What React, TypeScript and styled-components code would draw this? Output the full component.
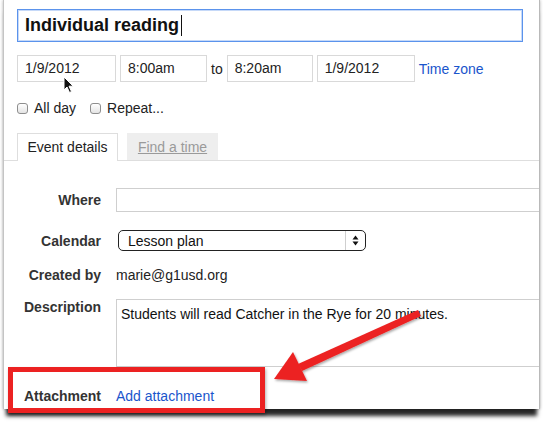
import styled, { createGlobalStyle } from 'styled-components';

const GlobalStyle = createGlobalStyle`
  html, body {
    margin: 0;
    padding: 0;
    background: #fff;
  }
  body {
    font-family: "Liberation Sans", Arial, sans-serif;
    color: #222;
  }
`;

const App = () => {
  return (
    <Frame>
      <GlobalStyle />
      <Panel>
        {/* title + time */}
        <TopSection>
          <TitleBox>
            Individual reading
            <Caret />
          </TitleBox>
          <DateRow>
            <DateInput $width={99}>1/9/2012</DateInput>
            <DateInput $width={87}>8:00am</DateInput>
            <Plain>to</Plain>
            <DateInput $width={86}>8:20am</DateInput>
            <DateInput $width={98}>1/9/2012</DateInput>
            <Link>Time zone</Link>
          </DateRow>
          <CheckRow>
            <CheckItem>
              <CheckBox />
              All day
            </CheckItem>
            <CheckItem>
              <CheckBox />
              Repeat...
            </CheckItem>
          </CheckRow>
        </TopSection>

        {/* tabs */}
        <TabBar>
          <Tab $active>Event details</Tab>
          <Tab>Find a time</Tab>
        </TabBar>

        {/* details */}
        <Form>
          <FormRow $top={27}>
            <Label>Where</Label>
            <TextBox />
          </FormRow>
          <FormRow $top={18}>
            <Label>Calendar</Label>
            <Select>
              <SelectText>Lesson plan</SelectText>
              <SelectArrows>
                <svg width="7" height="11" viewBox="0 0 7 11">
                  <path d="M3.5 0.5 L6.5 4.5 L0.5 4.5 Z" fill="#111" />
                  <path d="M3.5 10.5 L6.5 6.5 L0.5 6.5 Z" fill="#111" />
                </svg>
              </SelectArrows>
            </Select>
          </FormRow>
          <FormRow $top={16}>
            <Label>Created by</Label>
            <Value>marie@g1usd.org</Value>
          </FormRow>
          <FormRow $top={16} $start>
            <Label>Description</Label>
            <TextArea>Students will read Catcher in the Rye for 20 minutes.</TextArea>
          </FormRow>
          <FormRow $top={21}>
            <Label>Attachment</Label>
            <Link>Add attachment</Link>
          </FormRow>
        </Form>
      </Panel>

      {/* annotations */}
      <Pointer>
        <svg width="12" height="18" viewBox="0 0 12 18">
          <path
            d="M1 1 L1 14 L4 11 L6.5 16.5 L8.5 15.5 L6 10.2 L10.2 10.2 Z"
            fill="#111"
            stroke="#fff"
            strokeWidth="1"
            strokeLinejoin="round"
          />
        </svg>
      </Pointer>
      <Highlight />
      <ArrowLayer>
        <svg width="543" height="426" viewBox="0 0 543 426">
          <defs>
            <filter id="sh" x="-10%" y="-10%" width="120%" height="120%">
              <feDropShadow dx="1" dy="1.5" stdDeviation="1.2" floodColor="#000" floodOpacity="0.35" />
            </filter>
          </defs>
          <g filter="url(#sh)" fill="#ec2222">
            <path d="M418 310 L421 316 L302 371 L298 364 Z" />
            <path d="M274 379 L293 352 L307 381 Z" />
          </g>
        </svg>
      </ArrowLayer>
    </Frame>
  );
};

export default App;

const Frame = styled.div`
  position: relative;
  width: 543px;
  height: 426px;
  overflow: hidden;
`;

const Panel = styled.div`
  box-sizing: border-box;
  margin-left: 3px;
  width: 537px;
  height: 409px;
  background: #fff;
  border-left: 1px solid #c4c4c4;
  border-right: 1px solid #b9b9b9;
  box-shadow: 0 10px 4px -3px rgba(0, 0, 0, 0.85), 0 0 3px rgba(0, 0, 0, 0.3);
  overflow: hidden;
`;

const TopSection = styled.section`
  padding: 9px 0 0 13px;
`;

const TitleBox = styled.div`
  box-sizing: border-box;
  display: flex;
  align-items: center;
  width: 506px;
  height: 33px;
  padding-left: 7px;
  border: 1px solid #5b93ec;
  box-shadow: inset 0 0 0 1px rgba(91, 147, 236, 0.35);
  font-size: 18px;
  font-weight: bold;
  color: #111;
`;

const Caret = styled.span`
  display: inline-block;
  width: 1px;
  height: 21px;
  margin-left: 2px;
  background: #111;
`;

const DateRow = styled.div`
  display: flex;
  align-items: center;
  gap: 4px;
  margin-top: 13px;
  font-size: 14px;
`;

const DateInput = styled.div<{ $width: number }>`
  box-sizing: border-box;
  width: ${(props) => props.$width}px;
  height: 27px;
  padding-left: 7px;
  line-height: 25px;
  border: 1px solid #d9d9d9;
  color: #222;
`;

const Plain = styled.span`
  color: #222;
`;

const Link = styled.span`
  font-size: 14px;
  line-height: 16px;
  color: #1a55cc;
`;

const CheckRow = styled.div`
  display: flex;
  align-items: center;
  gap: 14px;
  margin-top: 18px;
  font-size: 14px;
  line-height: 16px;
  color: #222;
`;

const CheckItem = styled.label`
  display: flex;
  align-items: center;
  gap: 6px;
`;

const CheckBox = styled.span`
  box-sizing: border-box;
  display: inline-block;
  width: 11px;
  height: 11px;
  margin-top: 1px;
  border: 1px solid #8e8e8e;
  border-radius: 3px;
  background: linear-gradient(#ffffff, #e4e4e4);
`;

const TabBar = styled.div`
  display: flex;
  align-items: flex-end;
  gap: 9px;
  margin-top: 17px;
  padding-left: 13px;
  height: 27px;
  border-bottom: 1px solid #dedede;
`;

const Tab = styled.div<{ $active?: boolean }>`
  box-sizing: border-box;
  width: ${(props) => (props.$active ? 101 : 91)}px;
  height: ${(props) => (props.$active ? 28 : 27)}px;
  margin-bottom: ${(props) => (props.$active ? -1 : 0)}px;
  line-height: 26px;
  text-align: center;
  font-size: 14px;
  background: ${(props) => (props.$active ? '#fff' : '#eeeeee')};
  border: 1px solid ${(props) => (props.$active ? '#dedede' : '#eeeeee')};
  border-bottom: none;
  color: ${(props) => (props.$active ? '#222' : '#9a9a9a')};
  text-decoration: ${(props) => (props.$active ? 'none' : 'underline')};
`;

const Form = styled.section`
  display: flex;
  flex-direction: column;
`;

const FormRow = styled.div<{ $top: number; $start?: boolean }>`
  display: grid;
  grid-template-columns: 97px 1fr;
  column-gap: 15px;
  align-items: ${(props) => (props.$start ? 'start' : 'center')};
  margin-top: ${(props) => props.$top}px;
`;

const Label = styled.div`
  text-align: right;
  font-size: 14px;
  line-height: 16px;
  font-weight: bold;
  color: #333;
`;

const TextBox = styled.div`
  box-sizing: border-box;
  width: 440px;
  height: 24px;
  border: 1px solid #cfcfcf;
`;

const Select = styled.div`
  box-sizing: border-box;
  display: flex;
  align-items: center;
  width: 248px;
  height: 21px;
  margin-left: 2px;
  border: 1px solid #222;
  border-radius: 5px;
  font-size: 14px;
`;

const SelectText = styled.span`
  flex: 1;
  padding-left: 9px;
  color: #111;
`;

const SelectArrows = styled.span`
  display: flex;
  align-items: center;
  justify-content: center;
  width: 19px;
  height: 100%;
  border-left: 1px solid #cfcfcf;
`;

const Value = styled.div`
  font-size: 14px;
  line-height: 16px;
  color: #222;
`;

const TextArea = styled.div`
  box-sizing: border-box;
  width: 440px;
  height: 68px;
  padding: 6px 0 0 4px;
  border: 1px solid #cfcfcf;
  font-size: 14px;
  line-height: 16px;
  color: #111;
`;

// annotation overlays
const Pointer = styled.div`
  position: absolute;
  left: 63px;
  top: 76px;
  line-height: 0;
`;

const Highlight = styled.div`
  position: absolute;
  left: 8px;
  top: 367px;
  width: 257px;
  height: 46px;
  box-sizing: border-box;
  border: 5px solid #ec2222;
  box-shadow: 1px 2px 3px rgba(0, 0, 0, 0.3);
`;

const ArrowLayer = styled.div`
  position: absolute;
  left: 0;
  top: 0;
  line-height: 0;
  pointer-events: none;
`;
